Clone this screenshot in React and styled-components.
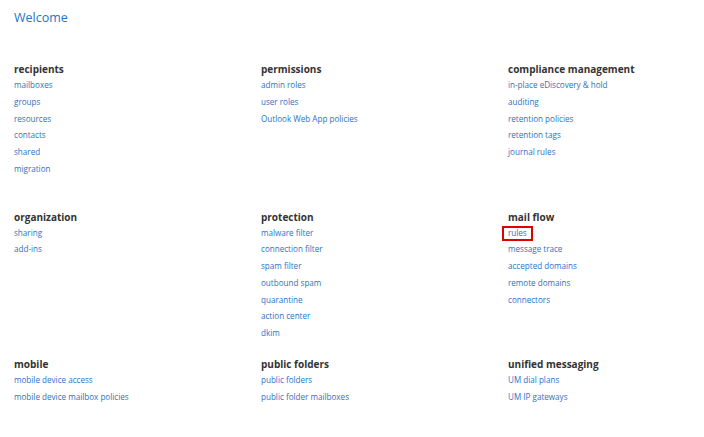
import React from "react";
import styled, { createGlobalStyle } from "styled-components";

const GlobalStyle = createGlobalStyle`
  body {
    margin: 0;
    background: #fff;
    font-family: "Open Sans", "Noto Sans", sans-serif;
  }
`;

const Page = styled.main`
  padding: 8px 14px 0;
`;

const Title = styled.h1`
  margin: 0;
  font-size: 12.5px;
  line-height: 20px;
  font-weight: 400;
  color: #2c72c7;
`;

const Grid = styled.div`
  display: grid;
  grid-template-columns: 247px 247px 1fr;
  grid-template-rows: 147.5px 147.5px auto;
  margin-top: 33px;
`;

const Section = styled.section`
  display: flex;
  flex-direction: column;
  align-items: flex-start;
`;

const Heading = styled.h2`
  margin: 0;
  font-size: 10px;
  line-height: 16px;
  font-weight: 700;
  color: #333;
`;

const Link = styled.a`
  position: relative;
  font-size: 8.1px;
  line-height: 16.8px;
  color: #2c72c7;
  text-decoration: none;
  cursor: pointer;

  ${(p) =>
    p.$marked &&
    `
    &::after {
      content: "";
      position: absolute;
      left: -6px;
      right: -6px;
      top: 1px;
      bottom: 0;
      border: 2px solid #e00000;
    }
  `}
`;

const sections = [
  {
    title: "recipients",
    links: ["mailboxes", "groups", "resources", "contacts", "shared", "migration"],
  },
  {
    title: "permissions",
    links: ["admin roles", "user roles", "Outlook Web App policies"],
  },
  {
    title: "compliance management",
    links: [
      "in-place eDiscovery & hold",
      "auditing",
      "retention policies",
      "retention tags",
      "journal rules",
    ],
  },
  { title: "organization", links: ["sharing", "add-ins"] },
  {
    title: "protection",
    links: [
      "malware filter",
      "connection filter",
      "spam filter",
      "outbound spam",
      "quarantine",
      "action center",
      "dkim",
    ],
  },
  {
    title: "mail flow",
    links: [
      "rules",
      "message trace",
      "accepted domains",
      "remote domains",
      "connectors",
    ],
    marked: "rules",
  },
  {
    title: "mobile",
    links: ["mobile device access", "mobile device mailbox policies"],
  },
  {
    title: "public folders",
    links: ["public folders", "public folder mailboxes"],
  },
  { title: "unified messaging", links: ["UM dial plans", "UM IP gateways"] },
];

export default function App() {
  return (
    <>
      <GlobalStyle />
      <Page>
        <Title>Welcome</Title>
        <Grid>
          {sections.map((s) => (
            <Section key={s.title}>
              <Heading>{s.title}</Heading>
              {s.links.map((l) => (
                <Link key={l} $marked={s.marked === l}>
                  {l}
                </Link>
              ))}
            </Section>
          ))}
        </Grid>
      </Page>
    </>
  );
}
